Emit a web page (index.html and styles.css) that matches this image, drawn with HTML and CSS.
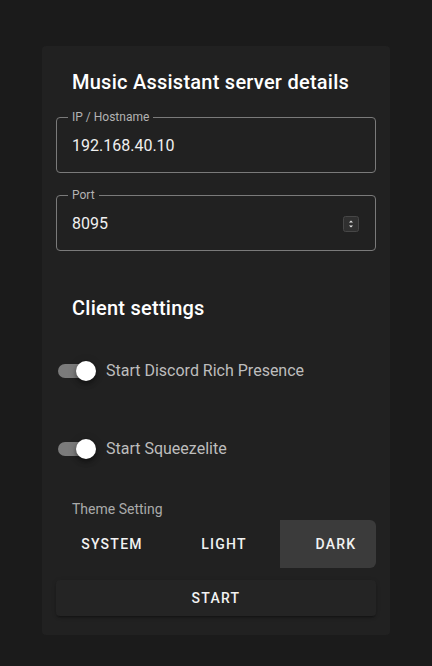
FILE: index.html
```html
<!DOCTYPE html>
<html lang="en">
<head>
<meta charset="utf-8">
<title>Music Assistant Companion</title>
<link rel="stylesheet" href="styles.css">
</head>
<body>
<div class="card">
  <h2 class="title">Music Assistant server details</h2>
  <div class="field field-ip">
    <span class="flabel">IP / Hostname</span>
    <span class="value">192.168.40.10</span>
  </div>
  <div class="field field-port">
    <span class="flabel">Port</span>
    <span class="value">8095</span>
    <svg class="spin" width="16" height="16" viewBox="0 0 16 16">
      <rect x="0.5" y="0.5" width="15" height="15" rx="2" fill="#303030" stroke="#474747"/>
      <polygon points="6,6.5 8,4.5 10,6.5" fill="#e6e6e6"/>
      <polygon points="6,9.5 8,11.5 10,9.5" fill="#e6e6e6"/>
    </svg>
  </div>
  <h2 class="title title-client">Client settings</h2>
  <div class="switch-row switch-first">
    <span class="switch"><span class="track"></span><span class="thumb"></span></span>
    <span class="slabel">Start Discord Rich Presence</span>
  </div>
  <div class="switch-row switch-second">
    <span class="switch"><span class="track"></span><span class="thumb"></span></span>
    <span class="slabel">Start Squeezelite</span>
  </div>
  <div class="theme-label">Theme Setting</div>
  <div class="toggle">
    <button class="tbtn">SYSTEM</button>
    <button class="tbtn">LIGHT</button>
    <button class="tbtn active">DARK</button>
  </div>
  <button class="start">START</button>
</div>
</body>
</html>
```

FILE: styles.css
```css
* { box-sizing: border-box; }
html, body { margin: 0; padding: 0; }
body {
  background: #1b1b1b;
  font-family: Roboto, "Noto Sans", sans-serif;
  color: #fff;
  width: 432px;
  height: 666px;
  overflow: hidden;
}
.card {
  width: 348px;
  margin: 46px auto 0;
  padding: 20px 14px 19px;
  background: #212121;
  border-radius: 4px;
  display: flex;
  flex-direction: column;
}
.title {
  margin: 0 0 0 16px;
  font-size: 20px;
  font-weight: 500;
  line-height: 32px;
  letter-spacing: 0.0125em;
  color: #fff;
}
.title-client { margin-top: 41px; }
.field {
  position: relative;
  height: 56px;
  border: 1px solid #7a7a7a;
  border-radius: 4px;
  display: flex;
  align-items: center;
  padding: 1px 16px 0 15px;
}
.field-ip { margin-top: 19px; }
.field-port { margin-top: 22px; }
.flabel {
  position: absolute;
  top: -8px;
  left: 11px;
  padding: 0 4px;
  font-size: 12px;
  line-height: 14px;
  color: #b3b3b3;
  background: #212121;
}
.value {
  flex: 1;
  font-size: 16px;
  line-height: 24px;
  padding-top: 1px;
  color: #f0f0f0;
}
.spin { display: block; flex: none; margin-top: 1px; }
.switch-row {
  display: flex;
  align-items: center;
  height: 24px;
  margin-left: 2px;
}
.switch-first { margin-top: 35px; }
.switch-second { margin-top: 54px; }
.switch {
  position: relative;
  width: 38px;
  height: 20px;
  flex: none;
  display: flex;
  align-items: center;
}
.track {
  width: 36px;
  height: 14px;
  border-radius: 7px;
  background: #7b7b7b;
}
.thumb {
  position: absolute;
  left: 18px;
  top: 0;
  width: 20px;
  height: 20px;
  border-radius: 50%;
  background: #fff;
  box-shadow: 0 2px 4px -1px rgba(0,0,0,.3), 0 4px 5px 0 rgba(0,0,0,.2), 0 1px 10px 0 rgba(0,0,0,.15);
}
.slabel {
  margin-left: 10px;
  font-size: 16px;
  line-height: 24px;
  color: #bdbdbd;
}
.theme-label {
  margin: 38px 0 0 16px;
  font-size: 14px;
  line-height: 20px;
  color: #aaaaaa;
}
.toggle {
  margin-top: 1px;
  width: 320px;
  height: 48px;
  display: flex;
  overflow: hidden;
  border-radius: 6px;
}
.tbtn, .start {
  font-family: Roboto, "Noto Sans", sans-serif;
  font-size: 14px;
  font-weight: 500;
  letter-spacing: 0.0892857em;
  color: #f2f2f2;
  border: 0;
  background: transparent;
  padding: 0;
  cursor: pointer;
}
.tbtn {
  flex: none;
  width: 112px;
  height: 48px;
}
.tbtn.active { background: #3b3b3b; }
.start {
  margin-top: 12px;
  height: 36px;
  width: 320px;
  border-radius: 4px;
  background: #242424;
  box-shadow: 0 3px 1px -2px rgba(0,0,0,.2), 0 2px 2px 0 rgba(0,0,0,.14), 0 1px 5px 0 rgba(0,0,0,.12);
}
```
